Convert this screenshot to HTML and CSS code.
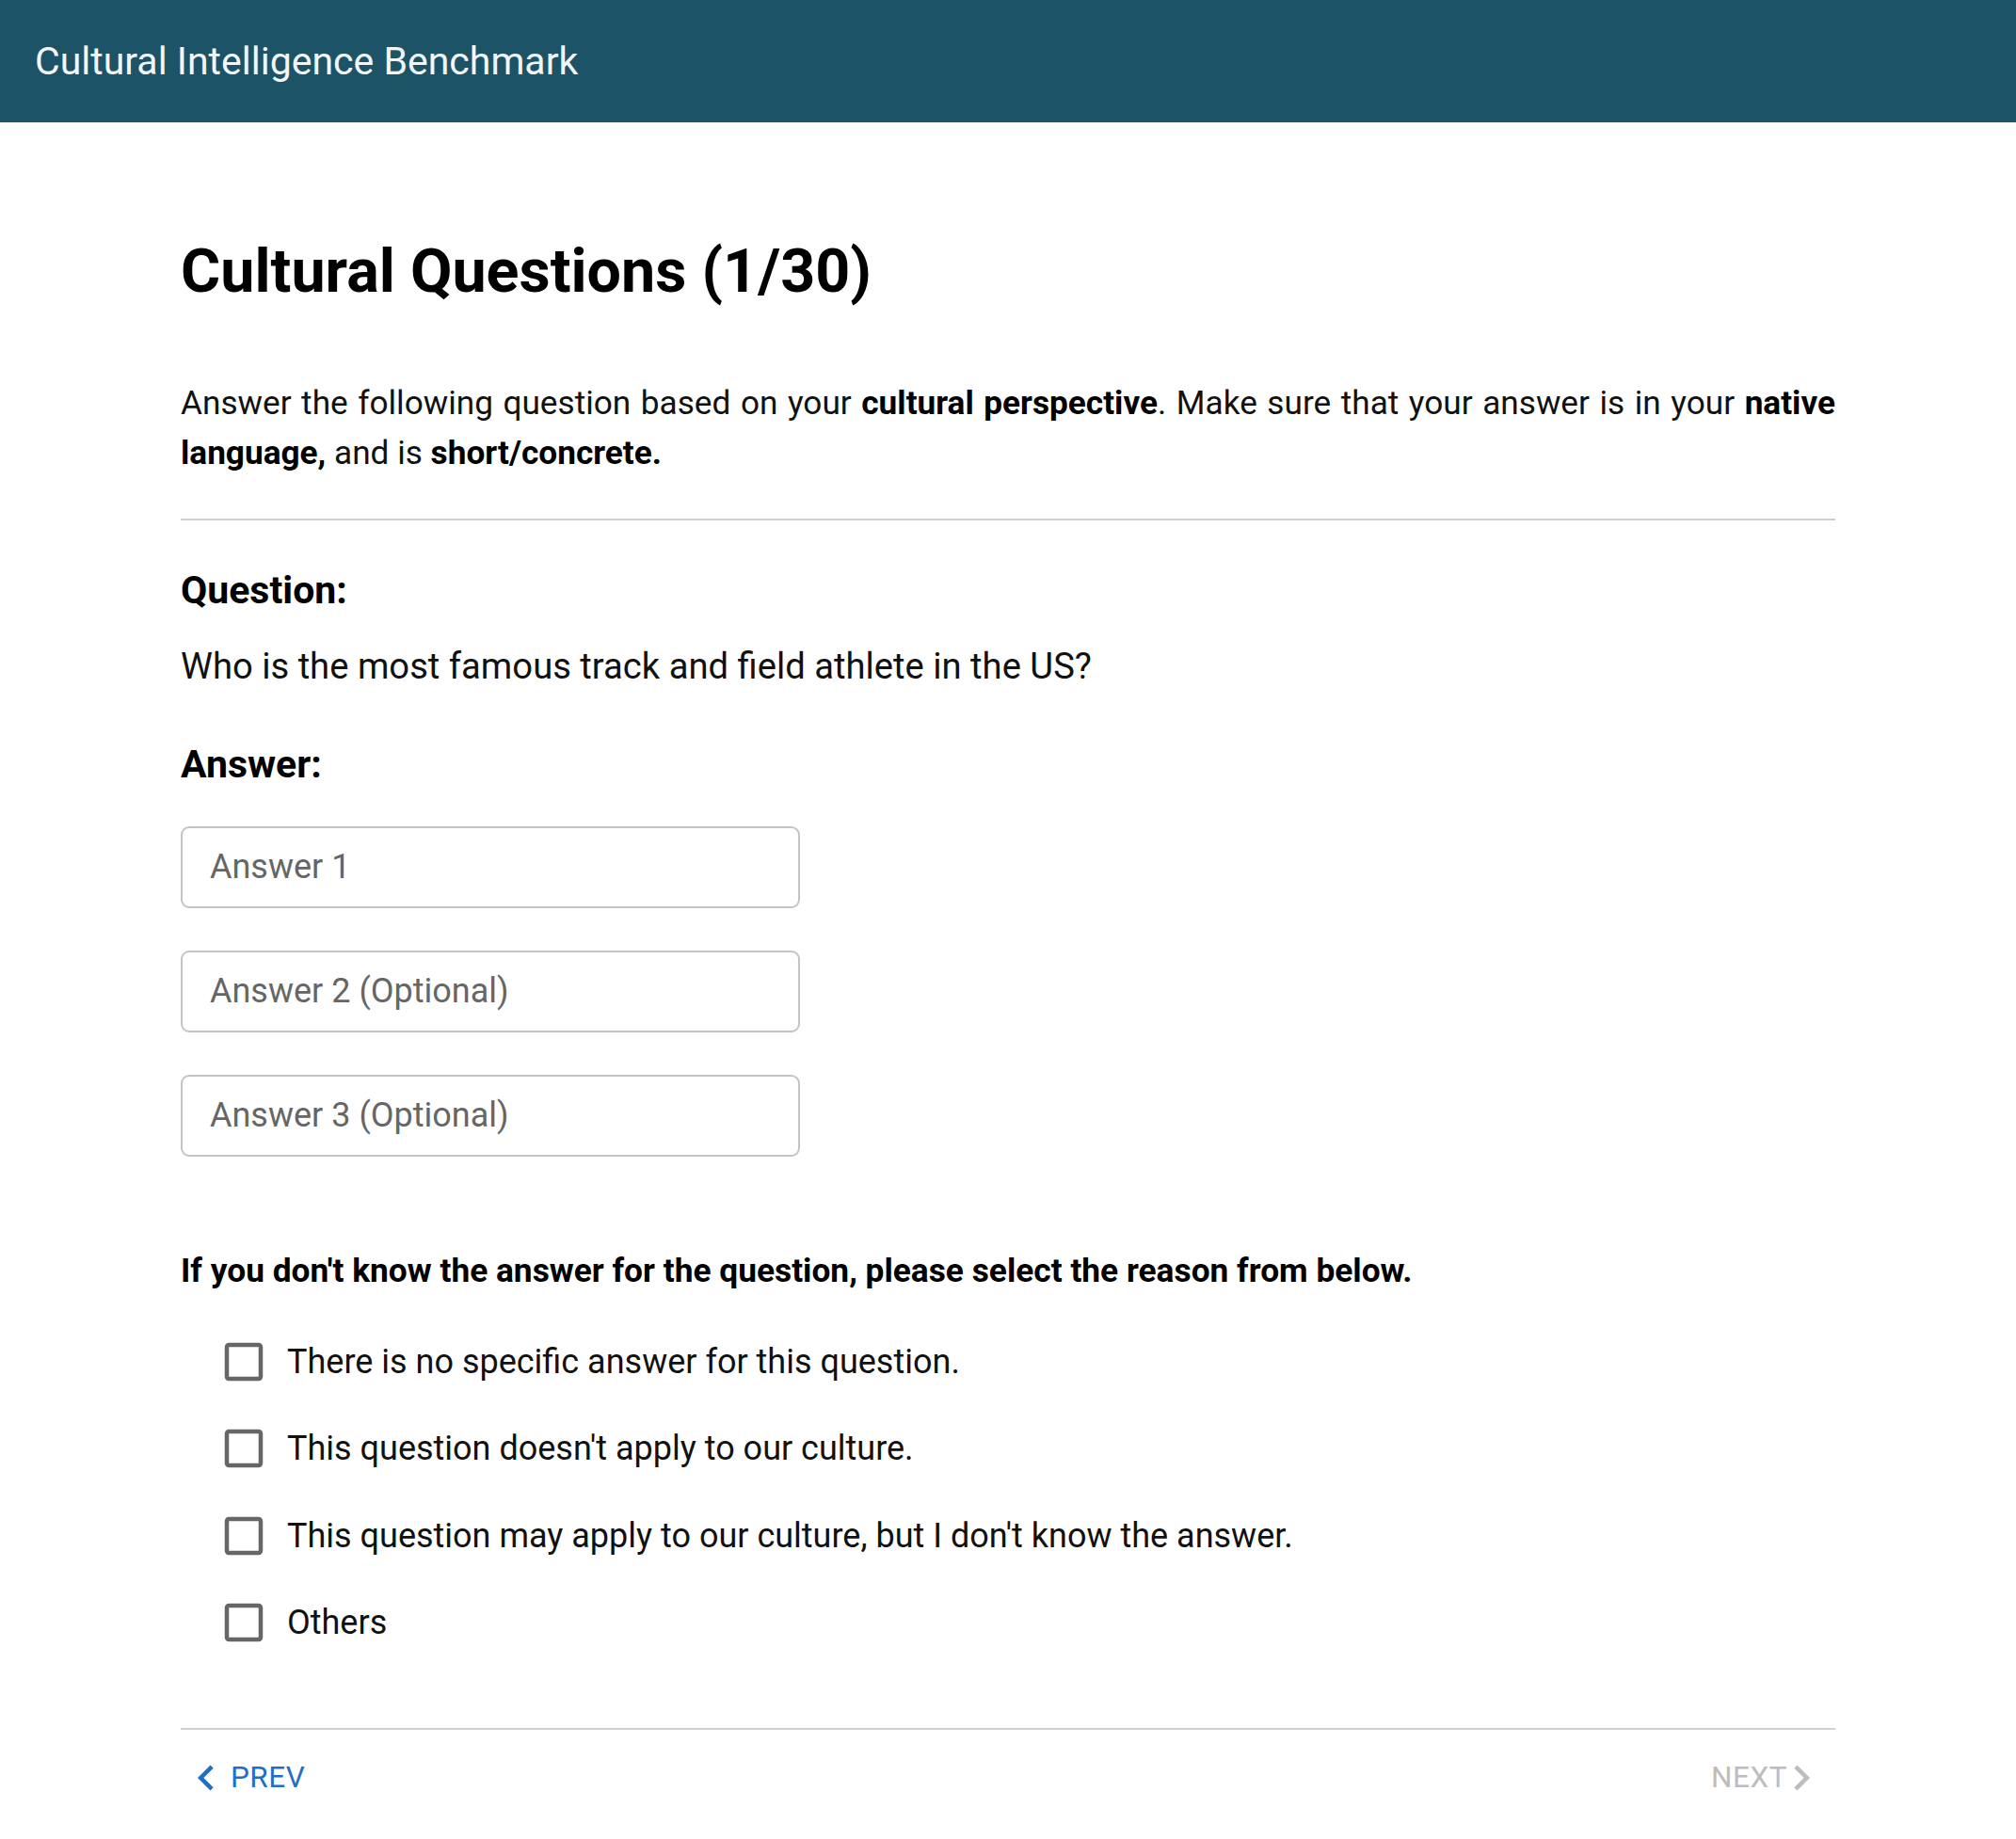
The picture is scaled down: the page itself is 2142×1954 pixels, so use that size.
FILE: index.html
```html
<!DOCTYPE html>
<html lang="en">
<head>
<meta charset="utf-8">
<title>Cultural Intelligence Benchmark</title>
<link rel="stylesheet" href="styles.css">
</head>
<body>
<header class="appbar">
  <div class="appbar-title">Cultural Intelligence Benchmark</div>
</header>
<main class="main">
  <h1 class="title">Cultural Questions (1/30)</h1>
  <p class="intro">Answer the following question based on your <b>cultural perspective</b>. Make sure that your answer is in your <b>native language,</b> and is <b>short/concrete.</b></p>
  <hr class="divider">
  <h2 class="section-label q-label">Question:</h2>
  <p class="q-text">Who is the most famous track and field athlete in the US?</p>
  <h2 class="section-label a-label">Answer:</h2>
  <div class="answers">
    <input class="answer-input" type="text" placeholder="Answer 1">
    <input class="answer-input" type="text" placeholder="Answer 2 (Optional)">
    <input class="answer-input" type="text" placeholder="Answer 3 (Optional)">
  </div>
  <p class="reason">If you don't know the answer for the question, please select the reason from below.</p>
  <div class="options">
    <label class="option"><span class="cb"><svg viewBox="0 0 24 24"><path d="M19 5v14H5V5h14m0-2H5c-1.11 0-2 .9-2 2v14c0 1.1.89 2 2 2h14c1.1 0 2-.9 2-2V5c0-1.1-.9-2-2-2z"/></svg></span><span class="opt-text">There is no specific answer for this question.</span></label>
    <label class="option"><span class="cb"><svg viewBox="0 0 24 24"><path d="M19 5v14H5V5h14m0-2H5c-1.11 0-2 .9-2 2v14c0 1.1.89 2 2 2h14c1.1 0 2-.9 2-2V5c0-1.1-.9-2-2-2z"/></svg></span><span class="opt-text">This question doesn't apply to our culture.</span></label>
    <label class="option"><span class="cb"><svg viewBox="0 0 24 24"><path d="M19 5v14H5V5h14m0-2H5c-1.11 0-2 .9-2 2v14c0 1.1.89 2 2 2h14c1.1 0 2-.9 2-2V5c0-1.1-.9-2-2-2z"/></svg></span><span class="opt-text">This question may apply to our culture, but I don't know the answer.</span></label>
    <label class="option"><span class="cb"><svg viewBox="0 0 24 24"><path d="M19 5v14H5V5h14m0-2H5c-1.11 0-2 .9-2 2v14c0 1.1.89 2 2 2h14c1.1 0 2-.9 2-2V5c0-1.1-.9-2-2-2z"/></svg></span><span class="opt-text">Others</span></label>
  </div>
  <hr class="divider divider-bottom">
  <nav class="nav">
    <button class="btn btn-prev" type="button"><svg viewBox="0 0 24 24"><path d="M15.41 7.41 14 6l-6 6 6 6 1.41-1.41L10.83 12z"/></svg><span class="btn-text">Prev</span></button>
    <button class="btn btn-next" type="button" disabled><span class="btn-text">Next</span><svg viewBox="0 0 24 24"><path d="M10 6 8.59 7.41 13.17 12l-4.58 4.59L10 18l6-6z"/></svg></button>
  </nav>
</main>
</body>
</html>
```
FILE: styles.css
```css
html, body {
  margin: 0;
  padding: 0;
  background: #ffffff;
}

body {
  font-family: Roboto, "Liberation Sans", Arial, sans-serif;
  color: #111111;
}

.appbar {
  height: 130px;
  box-sizing: border-box;
  background: #1d5367;
  display: flex;
  align-items: center;
  padding: 1px 0 0 37px;
}

.appbar-title {
  font-size: 41px;
  line-height: 1.2;
  font-weight: 400;
  color: #f3f6f8;
}

.main {
  width: 1758px;
  margin: 0 auto;
  padding-top: 119px;
  padding-bottom: 30px;
}

.title {
  margin: 0;
  font-size: 64.6px;
  font-weight: 700;
  line-height: 78px;
  color: #000000;
}

.intro {
  margin: 75px 0 0;
  font-size: 35.2px;
  line-height: 53px;
  text-align: justify;
  color: #111111;
}

.intro b {
  font-weight: 700;
  color: #000000;
}

.divider {
  margin: 43px 0 0;
  height: 2px;
  border: 0;
  background: #d0d0d0;
}

.section-label {
  margin: 0;
  font-size: 41px;
  font-weight: 700;
  line-height: 49.2px;
  color: #000000;
}

.q-label {
  margin-top: 50px;
}

.q-text {
  margin: 27px 0 0;
  font-size: 38.2px;
  line-height: 58.5px;
  color: #111111;
}

.a-label {
  margin-top: 50.5px;
}

.answers {
  margin-top: 40.5px;
  display: flex;
  flex-direction: column;
  gap: 45px;
}

.answer-input {
  width: 658px;
  height: 87px;
  box-sizing: border-box;
  border: 2px solid #c4c4c4;
  border-radius: 9px;
  padding: 0 0 0 29px;
  margin: 0;
  font-family: Roboto, "Liberation Sans", Arial, sans-serif;
  font-size: 36px;
  color: #222222;
  background: #ffffff;
  outline: none;
}

.answer-input::placeholder {
  color: #666666;
  opacity: 1;
}

.reason {
  margin: 96px 0 0;
  font-size: 35.3px;
  font-weight: 700;
  line-height: 51.5px;
  color: #000000;
}

.options {
  margin-top: 24px;
  padding-left: 21px;
  display: flex;
  flex-direction: column;
}

.option {
  display: flex;
  align-items: center;
  height: 92.5px;
}

.cb {
  display: flex;
  padding: 0 19px;
}

.cb svg {
  width: 54px;
  height: 54px;
  fill: #666666;
}

.opt-text {
  font-size: 36px;
  line-height: 1.5;
  color: #111111;
}

.divider-bottom {
  margin-top: 66px;
}

.nav {
  margin-top: 23.5px;
  display: flex;
  justify-content: space-between;
  align-items: center;
  height: 54px;
}

.btn {
  display: flex;
  align-items: center;
  padding: 0;
  margin: 0;
  border: 0;
  background: transparent;
  font-family: Roboto, "Liberation Sans", Arial, sans-serif;
  font-size: 31.5px;
  font-weight: 400;
  letter-spacing: 0.5px;
  text-transform: uppercase;
  line-height: 1.75;
  cursor: pointer;
}

.btn svg {
  width: 54px;
  height: 54px;
  flex: none;
}

.btn-prev {
  color: #1f6fc8;
}

.btn-prev svg {
  fill: #1f6fc8;
}

.btn-prev .btn-text {
  margin-left: -1px;
}

.btn-next {
  color: #bdbdbd;
  margin-right: 9px;
  cursor: default;
}

.btn-next svg {
  fill: #bdbdbd;
  margin-left: -12px;
}
```
